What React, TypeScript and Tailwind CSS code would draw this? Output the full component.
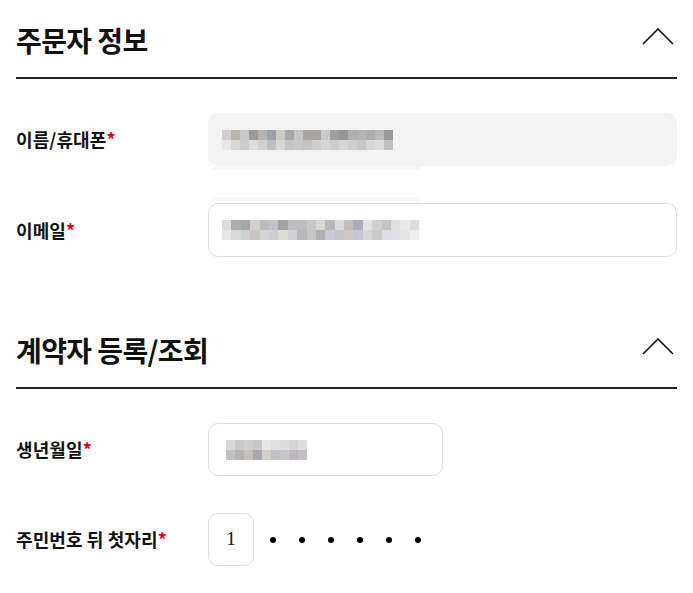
import React from "react";

const FONT = { fontFamily: '"Noto Sans CJK KR", "Noto Sans", sans-serif' };

const nameTop = ["#d0d0d0","#b9b5ae","#c5c9cc","#9b9b9c","#b6b3b0","#9ca2a8","#cfccc5","#a5a9ae","#c3c4c6","#aba59f","#a7a5a2","#c8cbcd","#9e9e9f","#969696","#afafaf","#b3b3b3","#adadad","#b9b9b9","#989898"];
const nameBot = ["#e8e8e8","#dbd8d3","#c9cbce","#dcdcdc","#d3d1cd","#bac0c4","#dad6d3","#c4c4c4","#c9c9c9","#c6c2be","#cfcdca","#d2d4d6","#cdcdcd","#d6d6d6","#cfcfcf","#c7c7c7","#d6d6d6","#dcdcdc","#c0c0c0"];
const mailTop = ["#dcdcdc","#b0acab","#a8a6a6","#d2d0cc","#bcbcbf","#c2c3c6","#a3a3a3","#bdbdbd","#bbbebf","#c6c6c6","#d9d7d0","#b9b8be","#dbdbdb","#c4c0b9","#adabbf","#e4e2df","#cfcfcf","#c6c3c1","#dedee0","#e9e9ea","#dddddd"];
const mailBot = ["#e6e6e6","#d8d8d8","#cdd0cf","#c9c5c3","#d4d4d4","#ccd1d3","#dcdcd6","#cdd0d6","#b7b7b7","#c5c5c5","#aeb1ac","#cccad6","#c5c3ce","#cdc9c3","#c7c6cf","#d6d6d6","#c9c9cb","#dcdce5","#e0dde5","#e6e6e6","#eeeeee"];
const birthTop = ["#d9d7d5","#cbc7c3","#d0cecb","#c9c5cb","#e8e5e1","#dfdfe4","#dcdadc","#d6d3da","#dcdcdc"];
const birthBot = ["#c3c1bf","#b8b3ae","#c3c1c0","#aba5ae","#d5d0c9","#c2c1c8","#c6c4c9","#bdb8c0","#c2c0c4"];

function Mosaic({ top, bot, w }: { top: string[]; bot: string[]; w: number }) {
  return (
    <div className="flex flex-col">
      <div className="flex">
        {top.map((c, i) => (
          <div key={i} className="h-[10px]" style={{ width: w, backgroundColor: c }} />
        ))}
      </div>
      <div className="flex">
        {bot.map((c, i) => (
          <div key={i} className="h-[10px]" style={{ width: w, backgroundColor: c }} />
        ))}
      </div>
    </div>
  );
}

function Chevron() {
  return (
    <svg width="32" height="17" viewBox="0 0 32 17" fill="none" className="mr-[3px] mt-[-5px]">
      <polyline points="1,16 16,1 31,16" stroke="#111" strokeWidth="1.6" fill="none" />
    </svg>
  );
}

function Header({ title }: { title: string }) {
  return (
    <div className="flex h-[79px] items-center justify-between border-b-2 border-[#222]">
      <h2 className="text-[28px] font-bold leading-none text-[#111] tracking-[-0.6px] pt-[2px]">{title}</h2>
      <Chevron />
    </div>
  );
}

function Label({ children }: { children: React.ReactNode }) {
  return (
    <div className="w-[192px] shrink-0 text-[18px] font-bold text-[#111] tracking-[0.1px]">
      {children}
      <span className="text-[#e60012]">*</span>
    </div>
  );
}

export default function App() {
  return (
    <div className="bg-white w-[693px] h-[593px] px-4 overflow-hidden" style={FONT}>
      <Header title="주문자 정보" />
      <div className="flex flex-col gap-[37px] pt-[34px]">
        <div className="flex items-center">
          <Label>이름/휴대폰</Label>
          <div className="relative flex-1">
            <div className="flex h-[53px] items-center rounded-[10px] bg-[#f3f3f3] pl-[14px]">
              <Mosaic top={nameTop} bot={nameBot} w={9} />
            </div>
            <div className="absolute left-[5px] top-[53px] h-[4px] w-[207px] bg-[#f7f7f7]" />
          </div>
        </div>
        <div className="flex items-center">
          <Label>이메일</Label>
          <div className="relative flex-1">
            <div className="absolute left-[5px] top-[-6px] h-[6px] w-[207px] bg-[#f8f8f8]" />
            <div className="flex h-[54px] items-center rounded-[10px] border border-[#dcdcdc] bg-white pl-[13px]">
              <Mosaic top={mailTop} bot={mailBot} w={9.4} />
            </div>
          </div>
        </div>
      </div>

      <div className="mt-[53px]">
        <Header title="계약자 등록/조회" />
      </div>
      <div className="flex flex-col gap-[37px] pt-[34px]">
        <div className="flex items-center">
          <Label>생년월일</Label>
          <div className="flex h-[53px] w-[235px] items-center rounded-[10px] border border-[#dcdcdc] bg-white pl-[17px]">
            <Mosaic top={birthTop} bot={birthBot} w={9} />
          </div>
        </div>
        <div className="flex items-center">
          <Label>주민번호 뒤 첫자리</Label>
          <div className="flex h-[53px] w-[46px] items-center justify-center rounded-[10px] border border-[#dcdcdc] bg-white text-[19px] text-[#111]" style={{ fontFamily: '"Liberation Serif", serif' }}>
            1
          </div>
          <div className="ml-[16px] flex items-center gap-[23px]">
            {[0, 1, 2, 3, 4, 5].map((i) => (
              <div key={i} className="h-[6px] w-[6px] rounded-full bg-black" />
            ))}
          </div>
        </div>
      </div>
    </div>
  );
}
